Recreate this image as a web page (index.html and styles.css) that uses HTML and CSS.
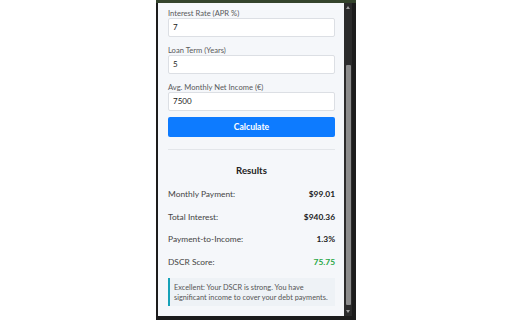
FILE: index.html
```html
<!DOCTYPE html>
<html>
<head>
<meta charset="utf-8">
<link rel="stylesheet" href="styles.css">
</head>
<body>
<div class="stage">
  <div class="window">
    <div class="topstrip"></div>
    <div class="body">
      <div class="panel">
        <div class="content">
          <div class="field">
            <label class="label">Interest Rate (APR %)</label>
            <div class="input">7</div>
          </div>
          <div class="field">
            <label class="label">Loan Term (Years)</label>
            <div class="input">5</div>
          </div>
          <div class="field field-last">
            <label class="label">Avg. Monthly Net Income (€)</label>
            <div class="input">7500</div>
          </div>
          <div class="button">Calculate</div>
          <div class="sep"></div>
          <div class="title">Results</div>
          <div class="row"><span>Monthly Payment:</span><b>$99.01</b></div>
          <div class="row"><span>Total Interest:</span><b>$940.36</b></div>
          <div class="row"><span>Payment-to-Income:</span><b>1.3%</b></div>
          <div class="row"><span>DSCR Score:</span><b class="good">75.75</b></div>
          <div class="note">Excellent: Your DSCR is strong. You have significant income to cover your debt payments.</div>
        </div>
      </div>
      <div class="scrollbar">
        <div class="arrow up"></div>
        <div class="track"><div class="thumb"></div></div>
        <div class="arrow down"></div>
      </div>
    </div>
  </div>
</div>
</body>
</html>
```
FILE: styles.css
```css
html, body {
  margin: 0;
  padding: 0;
  background: #ffffff;
}
.stage {
  width: 512px;
  height: 320px;
  display: flex;
  justify-content: center;
  overflow: hidden;
}
.window {
  width: 200px;
  height: 320px;
  background: #1c1c1c;
  display: flex;
  flex-direction: column;
}
.topstrip {
  height: 3px;
  background: #34442c;
  flex: none;
}
.body {
  flex: 1;
  display: flex;
  padding: 0 4px 4px 2px;
  min-height: 0;
}
.panel {
  width: 186px;
  background: #f5f7fa;
  overflow: hidden;
}
.content {
  padding: 5px 9px 0 10px;
  font-family: Lato, "Open Sans", sans-serif;
  color: #333;
}
.field {
  margin-bottom: 8px;
}
.field-last {
  margin-bottom: 6px;
}
.label {
  display: block;
  font-size: 7.6px;
  line-height: 10px;
  color: #5a5a5a;
}
.input {
  box-sizing: border-box;
  height: 19px;
  background: #fff;
  border: 1px solid #dcdfe4;
  border-radius: 2px;
  font-size: 8px;
  line-height: 17px;
  padding-left: 4px;
  color: #222;
}
.button {
  height: 20px;
  background: #0d7bff;
  border-radius: 2px;
  color: #fff;
  font-weight: 700;
  font-size: 8.6px;
  line-height: 20px;
  text-align: center;
}
.sep {
  height: 1px;
  background: #e3e6ea;
  margin-top: 12px;
}
.title {
  margin-top: 15px;
  font-size: 9.6px;
  font-weight: 700;
  line-height: 12px;
  text-align: center;
  color: #222;
}
.row {
  height: 22.67px;
  display: flex;
  justify-content: space-between;
  align-items: center;
  font-size: 8.4px;
  color: #444;
}
.title + .row {
  margin-top: 5.67px;
}
.row b {
  color: #222;
  font-weight: 700;
}
.row b.good {
  color: #28a745;
}
.note {
  margin-top: 4.67px;
  background: #eef2f6;
  border-left: 2.5px solid #17a2b8;
  padding: 5px 2px 3px 4px;
  font-size: 7.35px;
  line-height: 10px;
  color: #555;
}
.scrollbar {
  width: 8px;
  background: #2b2b2b;
  display: flex;
  flex-direction: column;
  align-items: center;
}
.arrow {
  width: 0;
  height: 0;
  border-left: 2.5px solid transparent;
  border-right: 2.5px solid transparent;
  margin: 3px 0;
  flex: none;
}
.arrow.up {
  border-bottom: 3px solid #a0a0a0;
}
.arrow.down {
  border-top: 3px solid #a0a0a0;
}
.track {
  flex: 1;
  width: 5px;
  display: flex;
  flex-direction: column;
  justify-content: flex-end;
}
.thumb {
  height: 240px;
  background: #8c8c8c;
  border-radius: 1px;
  margin-bottom: 2px;
}
```
